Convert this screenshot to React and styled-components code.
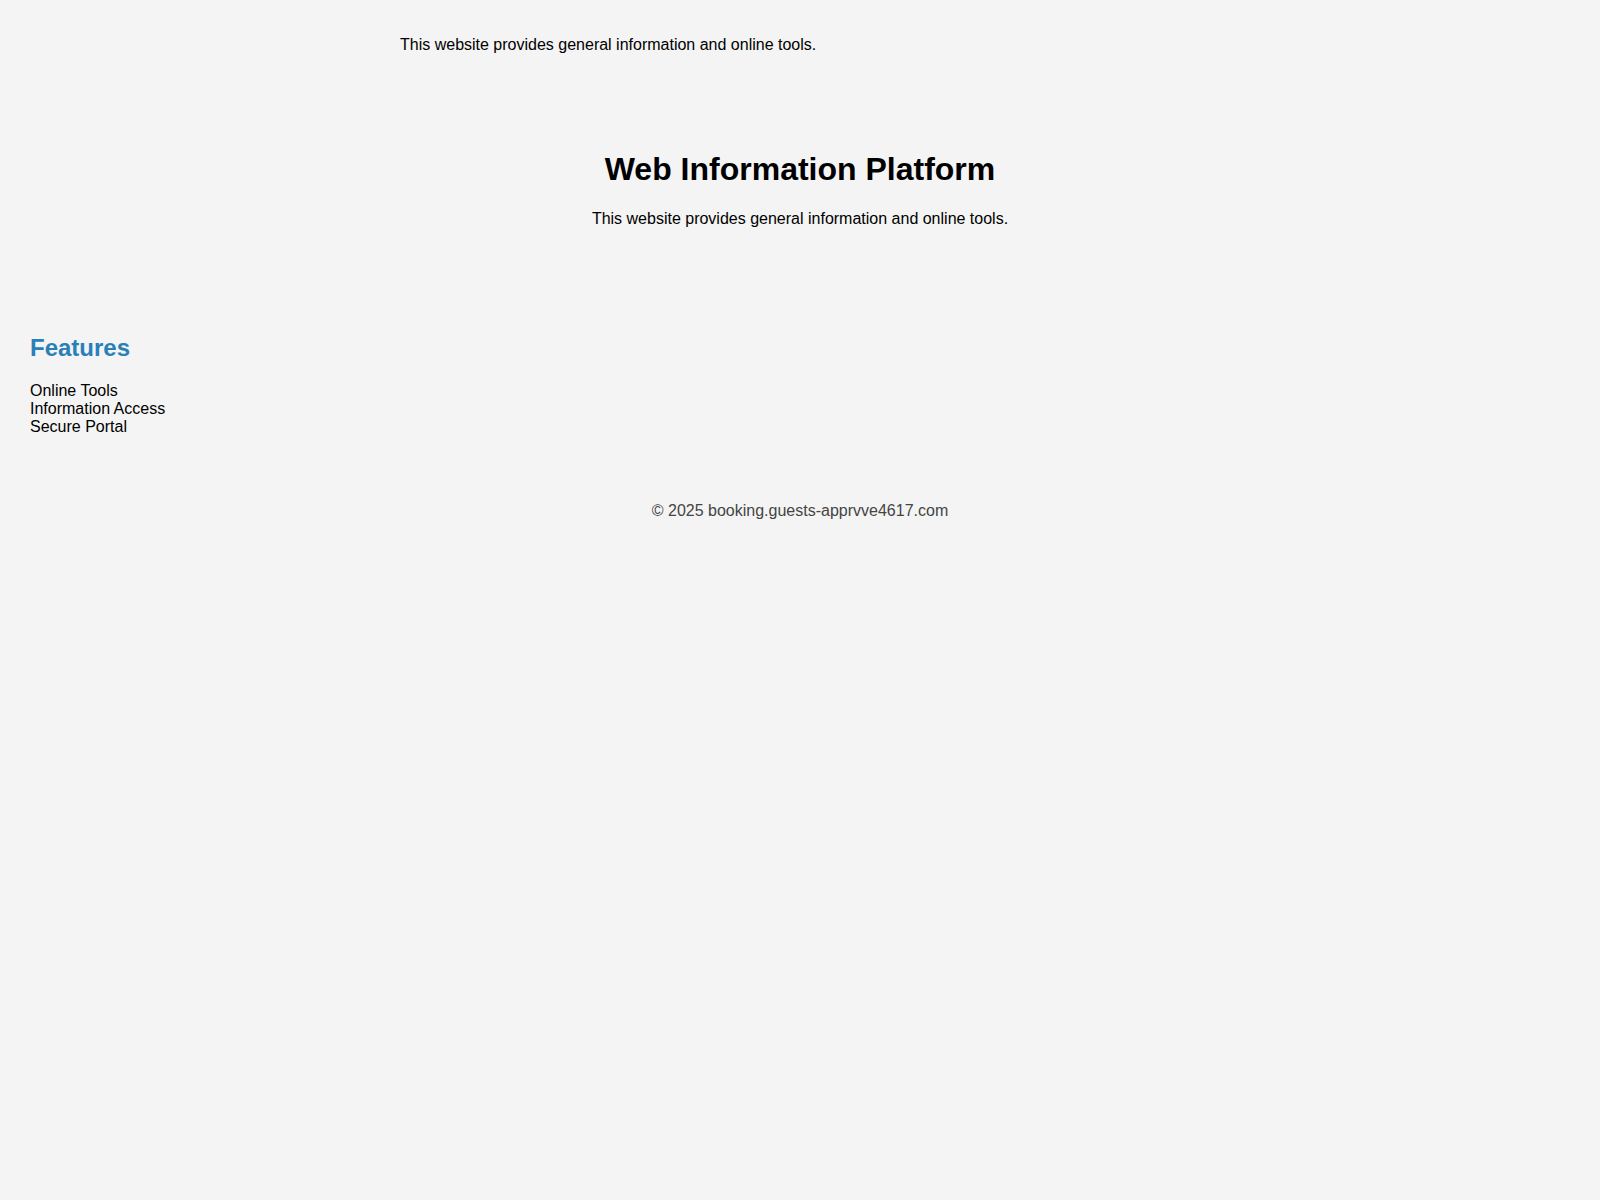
import React from "react";
import styled, { createGlobalStyle } from "styled-components";

const GlobalStyle = createGlobalStyle`
  html, body {
    margin: 0;
    padding: 0;
    background: #f4f4f4;
    font-family: "Liberation Sans", Arial, sans-serif;
    color: #000;
  }
`;

const Header = styled.header`
  max-width: 800px;
  margin: 0 auto;
  padding: 20px 0;
  font-size: 16px;

  p {
    margin: 16px 0;
  }
`;

const Hero = styled.section`
  padding: 61px 20px 60px;
  text-align: center;
`;

const Title = styled.h1`
  margin: 0 0 22px;
  font-size: 32px;
  font-weight: bold;
`;

const Lead = styled.p`
  margin: 0;
  font-size: 16px;
`;

const Features = styled.section`
  padding: 46px 30px 0;
`;

const FeaturesTitle = styled.h2`
  margin: 0 0 20px;
  font-size: 24px;
  color: #2980b9;
`;

const FeatureList = styled.ul`
  list-style: none;
  margin: 0;
  padding: 0;
  font-size: 16px;
  line-height: 18px;
`;

const Footer = styled.footer`
  margin-top: 66px;
  text-align: center;
  font-size: 16px;
  color: #444;
`;

const features = ["Online Tools", "Information Access", "Secure Portal"];

const App = () => (
  <>
    <GlobalStyle />
    <Header>
      <p>This website provides general information and online tools.</p>
    </Header>
    <Hero>
      <Title>Web Information Platform</Title>
      <Lead>This website provides general information and online tools.</Lead>
    </Hero>
    <Features>
      <FeaturesTitle>Features</FeaturesTitle>
      <FeatureList>
        {features.map((f) => (
          <li key={f}>{f}</li>
        ))}
      </FeatureList>
    </Features>
    <Footer>© 2025 booking.guests-apprvve4617.com</Footer>
  </>
);

export default App;
